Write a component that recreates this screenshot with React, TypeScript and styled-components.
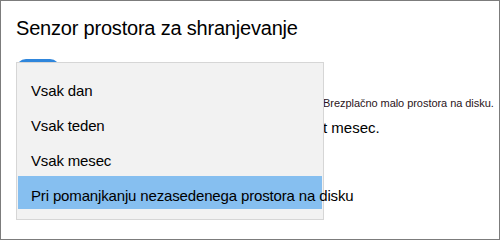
import styled, { createGlobalStyle } from "styled-components"

const GlobalStyle = createGlobalStyle`
  body {
    margin: 0;
    font-family: "Liberation Sans", Arial, sans-serif;
    background: #fff;
  }
`

const options = ["Vsak dan", "Vsak teden", "Vsak mesec", "Pri pomanjkanju nezasedenega prostora na disku"]

function App() {
  return (
    <Frame>
      <GlobalStyle />
      <Title>Senzor prostora za shranjevanje</Title>
      <Toggle />
      <Settings>
        <Spacer />
        <Note>Brezplačno malo prostora na disku.</Note>
        <Spacer />
        <Value>t mesec.</Value>
      </Settings>
      <Menu>
        {options.map((o, i) => (
          <Option key={o} selected={i === 3}>{o}</Option>
        ))}
      </Menu>
    </Frame>
  )
}

const Frame = styled.div`
  position: relative;
  box-sizing: border-box;
  width: 500px;
  height: 240px;
  border: 1px solid #7c7c7c;
  padding: 15px 15px;
  background: #fff;
  overflow: hidden;
`

const Title = styled.h1`
  margin: 0;
  font-size: 20px;
  line-height: 24px;
  font-weight: normal;
  letter-spacing: -0.2px;
  color: #000;
`

const Toggle = styled.div`
  margin-top: 19px;
  width: 44px;
  height: 20px;
  border-radius: 10px;
  background: #2f86dc;
`

const Settings = styled.div`
  display: grid;
  grid-template-columns: 307px 1fr;
  row-gap: 9px;
  margin-top: 17px;
  align-items: end;
`

const Spacer = styled.span``

const Note = styled.span`
  font-size: 11px;
  line-height: 14px;
  letter-spacing: -0.05px;
  color: #2a1420;
  white-space: nowrap;
`

const Value = styled.span`
  font-size: 15px;
  line-height: 18px;
  color: #000;
  white-space: nowrap;
`

const Menu = styled.div`
  position: absolute;
  left: 15px;
  top: 61px;
  box-sizing: border-box;
  width: 308px;
  height: 158px;
  border: 1px solid #d6d6d6;
  background: #f2f2f2;
  padding: 8px 1px;
  display: flex;
  flex-direction: column;
  gap: 2px;
`

const Option = styled.div<{ selected?: boolean }>`
  height: 33px;
  box-sizing: border-box;
  padding: 11px 13px 5px;
  font-size: 15px;
  line-height: 17px;
  letter-spacing: -0.15px;
  color: #000;
  white-space: nowrap;
  background: ${(p) => (p.selected ? "#86bff0" : "transparent")};
`

export default App
